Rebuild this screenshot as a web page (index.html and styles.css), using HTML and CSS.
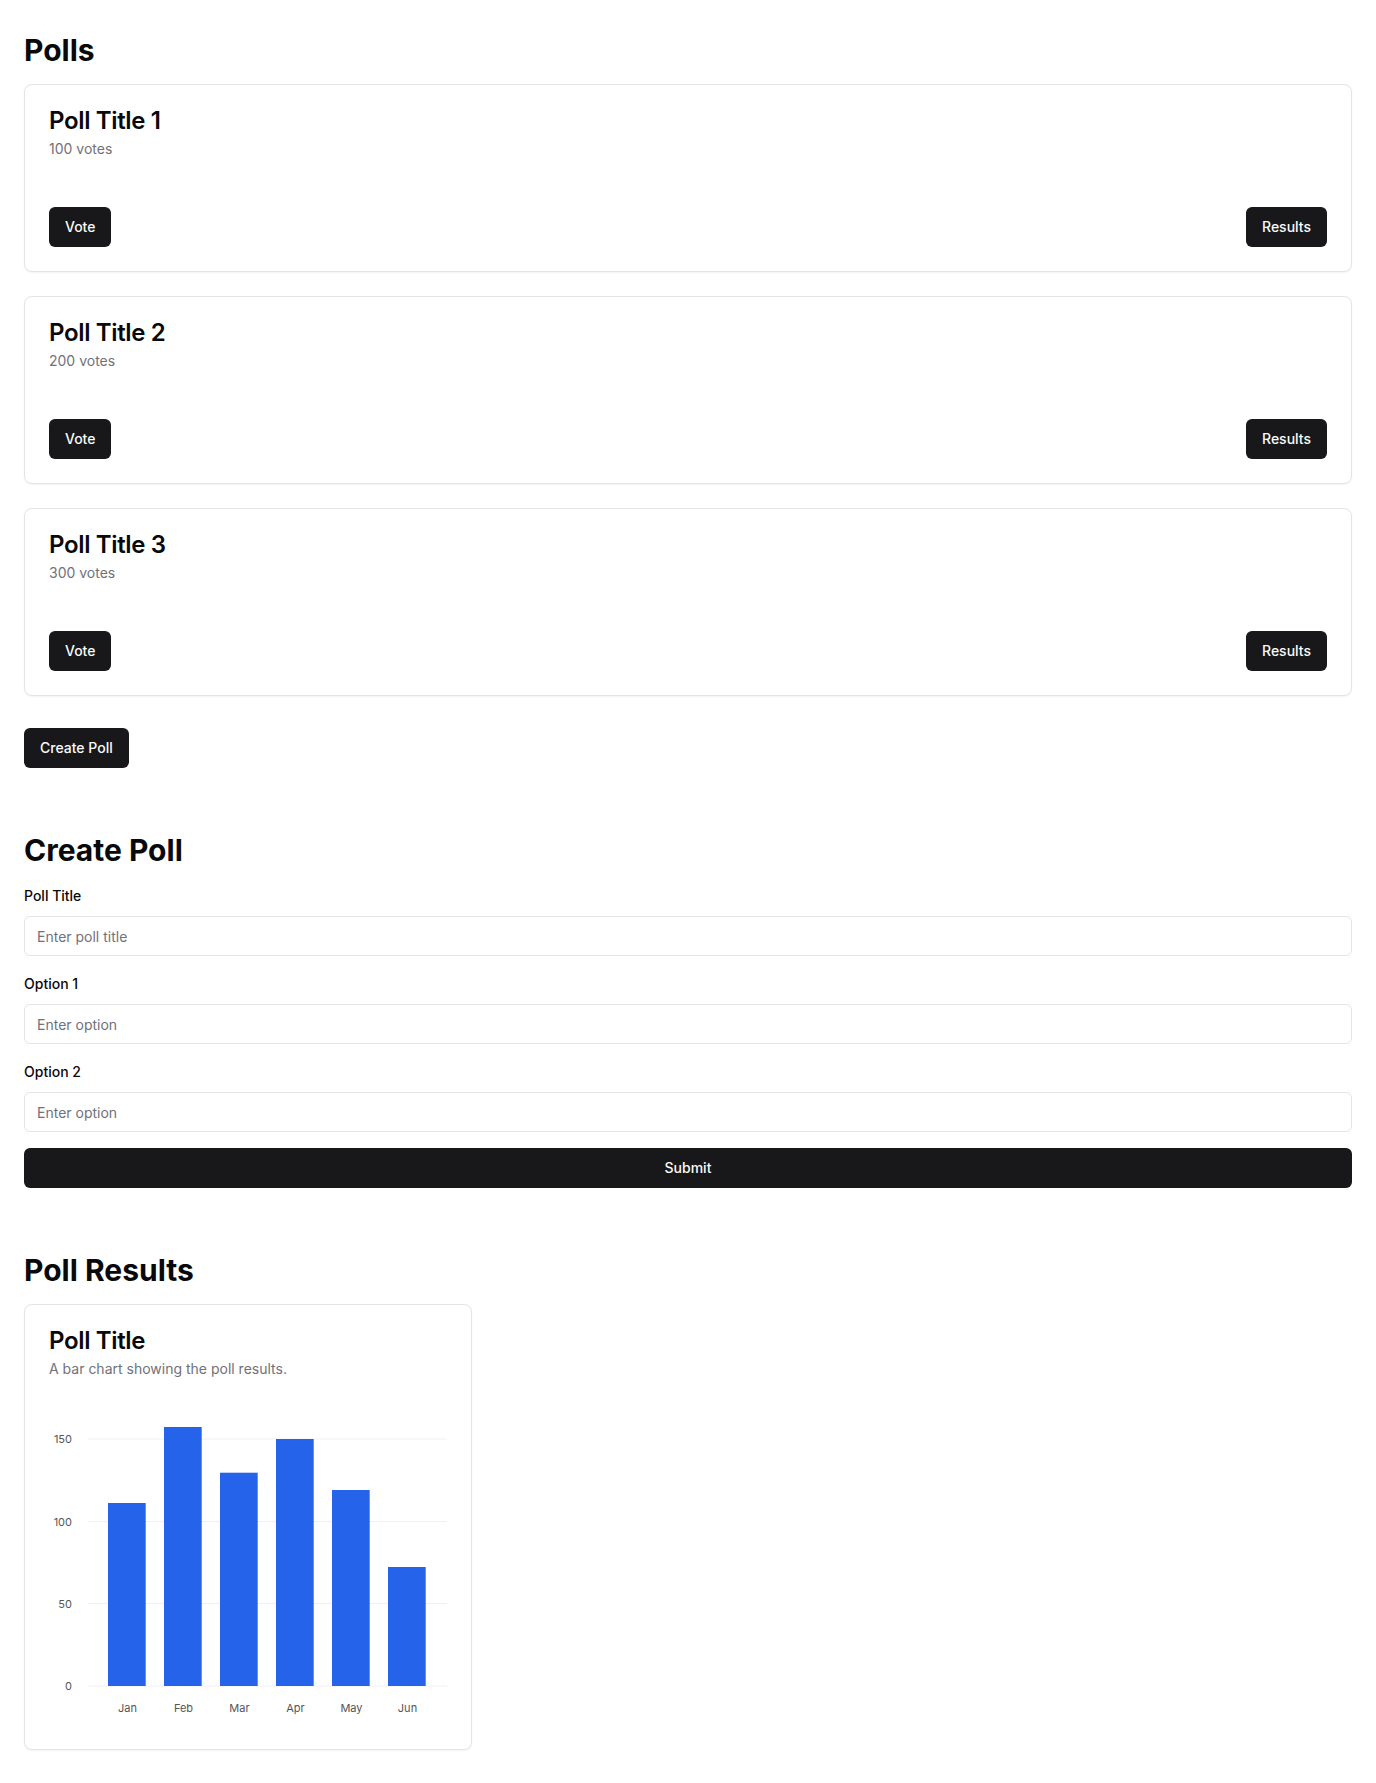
FILE: index.html
```html
<!DOCTYPE html>
<html lang="en">
<head>
<meta charset="utf-8">
<title>Polls</title>
<link rel="stylesheet" href="styles.css">
</head>
<body>
<main class="page">
  <section class="section">
    <h1 class="heading">Polls</h1>
    <div class="poll-list">
      <div class="card poll-card">
        <h3 class="card-title">Poll Title 1</h3>
        <p class="card-desc">100 votes</p>
        <div class="card-footer">
          <button class="btn">Vote</button>
          <button class="btn">Results</button>
        </div>
      </div>
      <div class="card poll-card">
        <h3 class="card-title">Poll Title 2</h3>
        <p class="card-desc">200 votes</p>
        <div class="card-footer">
          <button class="btn">Vote</button>
          <button class="btn">Results</button>
        </div>
      </div>
      <div class="card poll-card">
        <h3 class="card-title">Poll Title 3</h3>
        <p class="card-desc">300 votes</p>
        <div class="card-footer">
          <button class="btn">Vote</button>
          <button class="btn">Results</button>
        </div>
      </div>
    </div>
    <button class="btn create-btn">Create Poll</button>
  </section>

  <section class="section section-gap">
    <h2 class="heading">Create Poll</h2>
    <form class="form">
      <div class="field">
        <label class="label" for="title">Poll Title</label>
        <input class="input" id="title" type="text" placeholder="Enter poll title">
      </div>
      <div class="field">
        <label class="label" for="opt1">Option 1</label>
        <input class="input" id="opt1" type="text" placeholder="Enter option">
      </div>
      <div class="field">
        <label class="label" for="opt2">Option 2</label>
        <input class="input" id="opt2" type="text" placeholder="Enter option">
      </div>
      <button class="btn btn-full" type="button">Submit</button>
    </form>
  </section>

  <section class="section section-gap">
    <h2 class="heading">Poll Results</h2>
    <div class="card results-card">
      <h3 class="card-title">Poll Title</h3>
      <p class="card-desc">A bar chart showing the poll results.</p>
      <div class="chart">
        <svg class="chart-svg" width="398" height="322" viewBox="0 0 398 322">
          <g class="grid">
            <line x1="39" x2="398" y1="36" y2="36"></line>
            <line x1="39" x2="398" y1="118.5" y2="118.5"></line>
            <line x1="39" x2="398" y1="200.5" y2="200.5"></line>
            <line x1="39" x2="398" y1="283" y2="283"></line>
          </g>
          <g class="ticks">
            <text x="23" y="40">150</text>
            <text x="23" y="122.5">100</text>
            <text x="23" y="204.5">50</text>
            <text x="23" y="287">0</text>
          </g>
          <g class="bars">
            <rect x="59" y="100" width="37.7" height="183"></rect>
            <rect x="115" y="24" width="37.7" height="259"></rect>
            <rect x="171" y="69.7" width="37.7" height="213.3"></rect>
            <rect x="227" y="36" width="37.7" height="247"></rect>
            <rect x="283" y="87" width="37.7" height="196"></rect>
            <rect x="339" y="164" width="37.7" height="119"></rect>
          </g>
          <g class="xticks">
            <text x="78.5" y="309">Jan</text>
            <text x="134.5" y="309">Feb</text>
            <text x="190.5" y="309">Mar</text>
            <text x="246.5" y="309">Apr</text>
            <text x="302.5" y="309">May</text>
            <text x="358.5" y="309">Jun</text>
          </g>
        </svg>
      </div>
    </div>
  </section>
</main>
</body>
</html>
```

FILE: styles.css
```css
* {
  box-sizing: border-box;
}

html, body {
  margin: 0;
  padding: 0;
  background: #ffffff;
}

body {
  font-family: Inter, "Noto Sans", "Liberation Sans", sans-serif;
  color: #09090b;
  font-size: 16px;
  line-height: 24px;
}

.page {
  padding: 32px 24px 33px;
}

.section {
  display: flex;
  flex-direction: column;
  align-items: flex-start;
}

.section-gap {
  margin-top: 64px;
}

.heading {
  margin: 0 0 16px;
  font-size: 30px;
  line-height: 36px;
  font-weight: 700;
}

.poll-list {
  display: flex;
  flex-direction: column;
  gap: 24px;
  width: 100%;
}

.card {
  background: #ffffff;
  border: 1px solid #e4e4e7;
  border-radius: 8px;
  box-shadow: 0 1px 2px 0 rgba(0, 0, 0, 0.05);
  padding: 24px;
}

.card-title {
  margin: 0;
  font-size: 24px;
  line-height: 24px;
  font-weight: 600;
  letter-spacing: -0.35px;
}

.card-desc {
  margin: 6px 0 0;
  font-size: 14px;
  line-height: 20px;
  color: #71717a;
}

.card-footer {
  margin-top: 48px;
  display: flex;
  justify-content: space-between;
  align-items: center;
}

.btn {
  font-family: inherit;
  height: 40px;
  padding: 0 16px;
  border: none;
  border-radius: 6px;
  background: #18181b;
  color: #fafafa;
  font-size: 14px;
  font-weight: 500;
  line-height: 20px;
  cursor: pointer;
}

.create-btn {
  margin-top: 32px;
}

.form {
  width: 100%;
  display: flex;
  flex-direction: column;
}

.field {
  margin-bottom: 16px;
}

.label {
  display: block;
  font-size: 14px;
  font-weight: 500;
  line-height: 24px;
  margin-bottom: 8px;
  color: #09090b;
}

.input {
  display: block;
  width: 100%;
  height: 40px;
  padding: 8px 12px;
  border: 1px solid #e4e4e7;
  border-radius: 6px;
  background: #ffffff;
  font-family: inherit;
  font-size: 14px;
  color: #09090b;
  outline: none;
}

.input::placeholder {
  color: #71717a;
}

.btn-full {
  width: 100%;
}

.results-card {
  width: 448px;
}

.chart {
  margin-top: 24px;
  height: 322px;
}

.chart-svg {
  display: block;
  overflow: visible;
}

.grid line {
  stroke: #f1f1f1;
  stroke-width: 1;
}

.bars rect {
  fill: #2563eb;
}

.ticks text,
.xticks text {
  font-family: Inter, "Noto Sans", sans-serif;
  font-size: 11px;
  fill: #555555;
}

.ticks text {
  text-anchor: end;
}

.xticks text {
  text-anchor: middle;
}
```
